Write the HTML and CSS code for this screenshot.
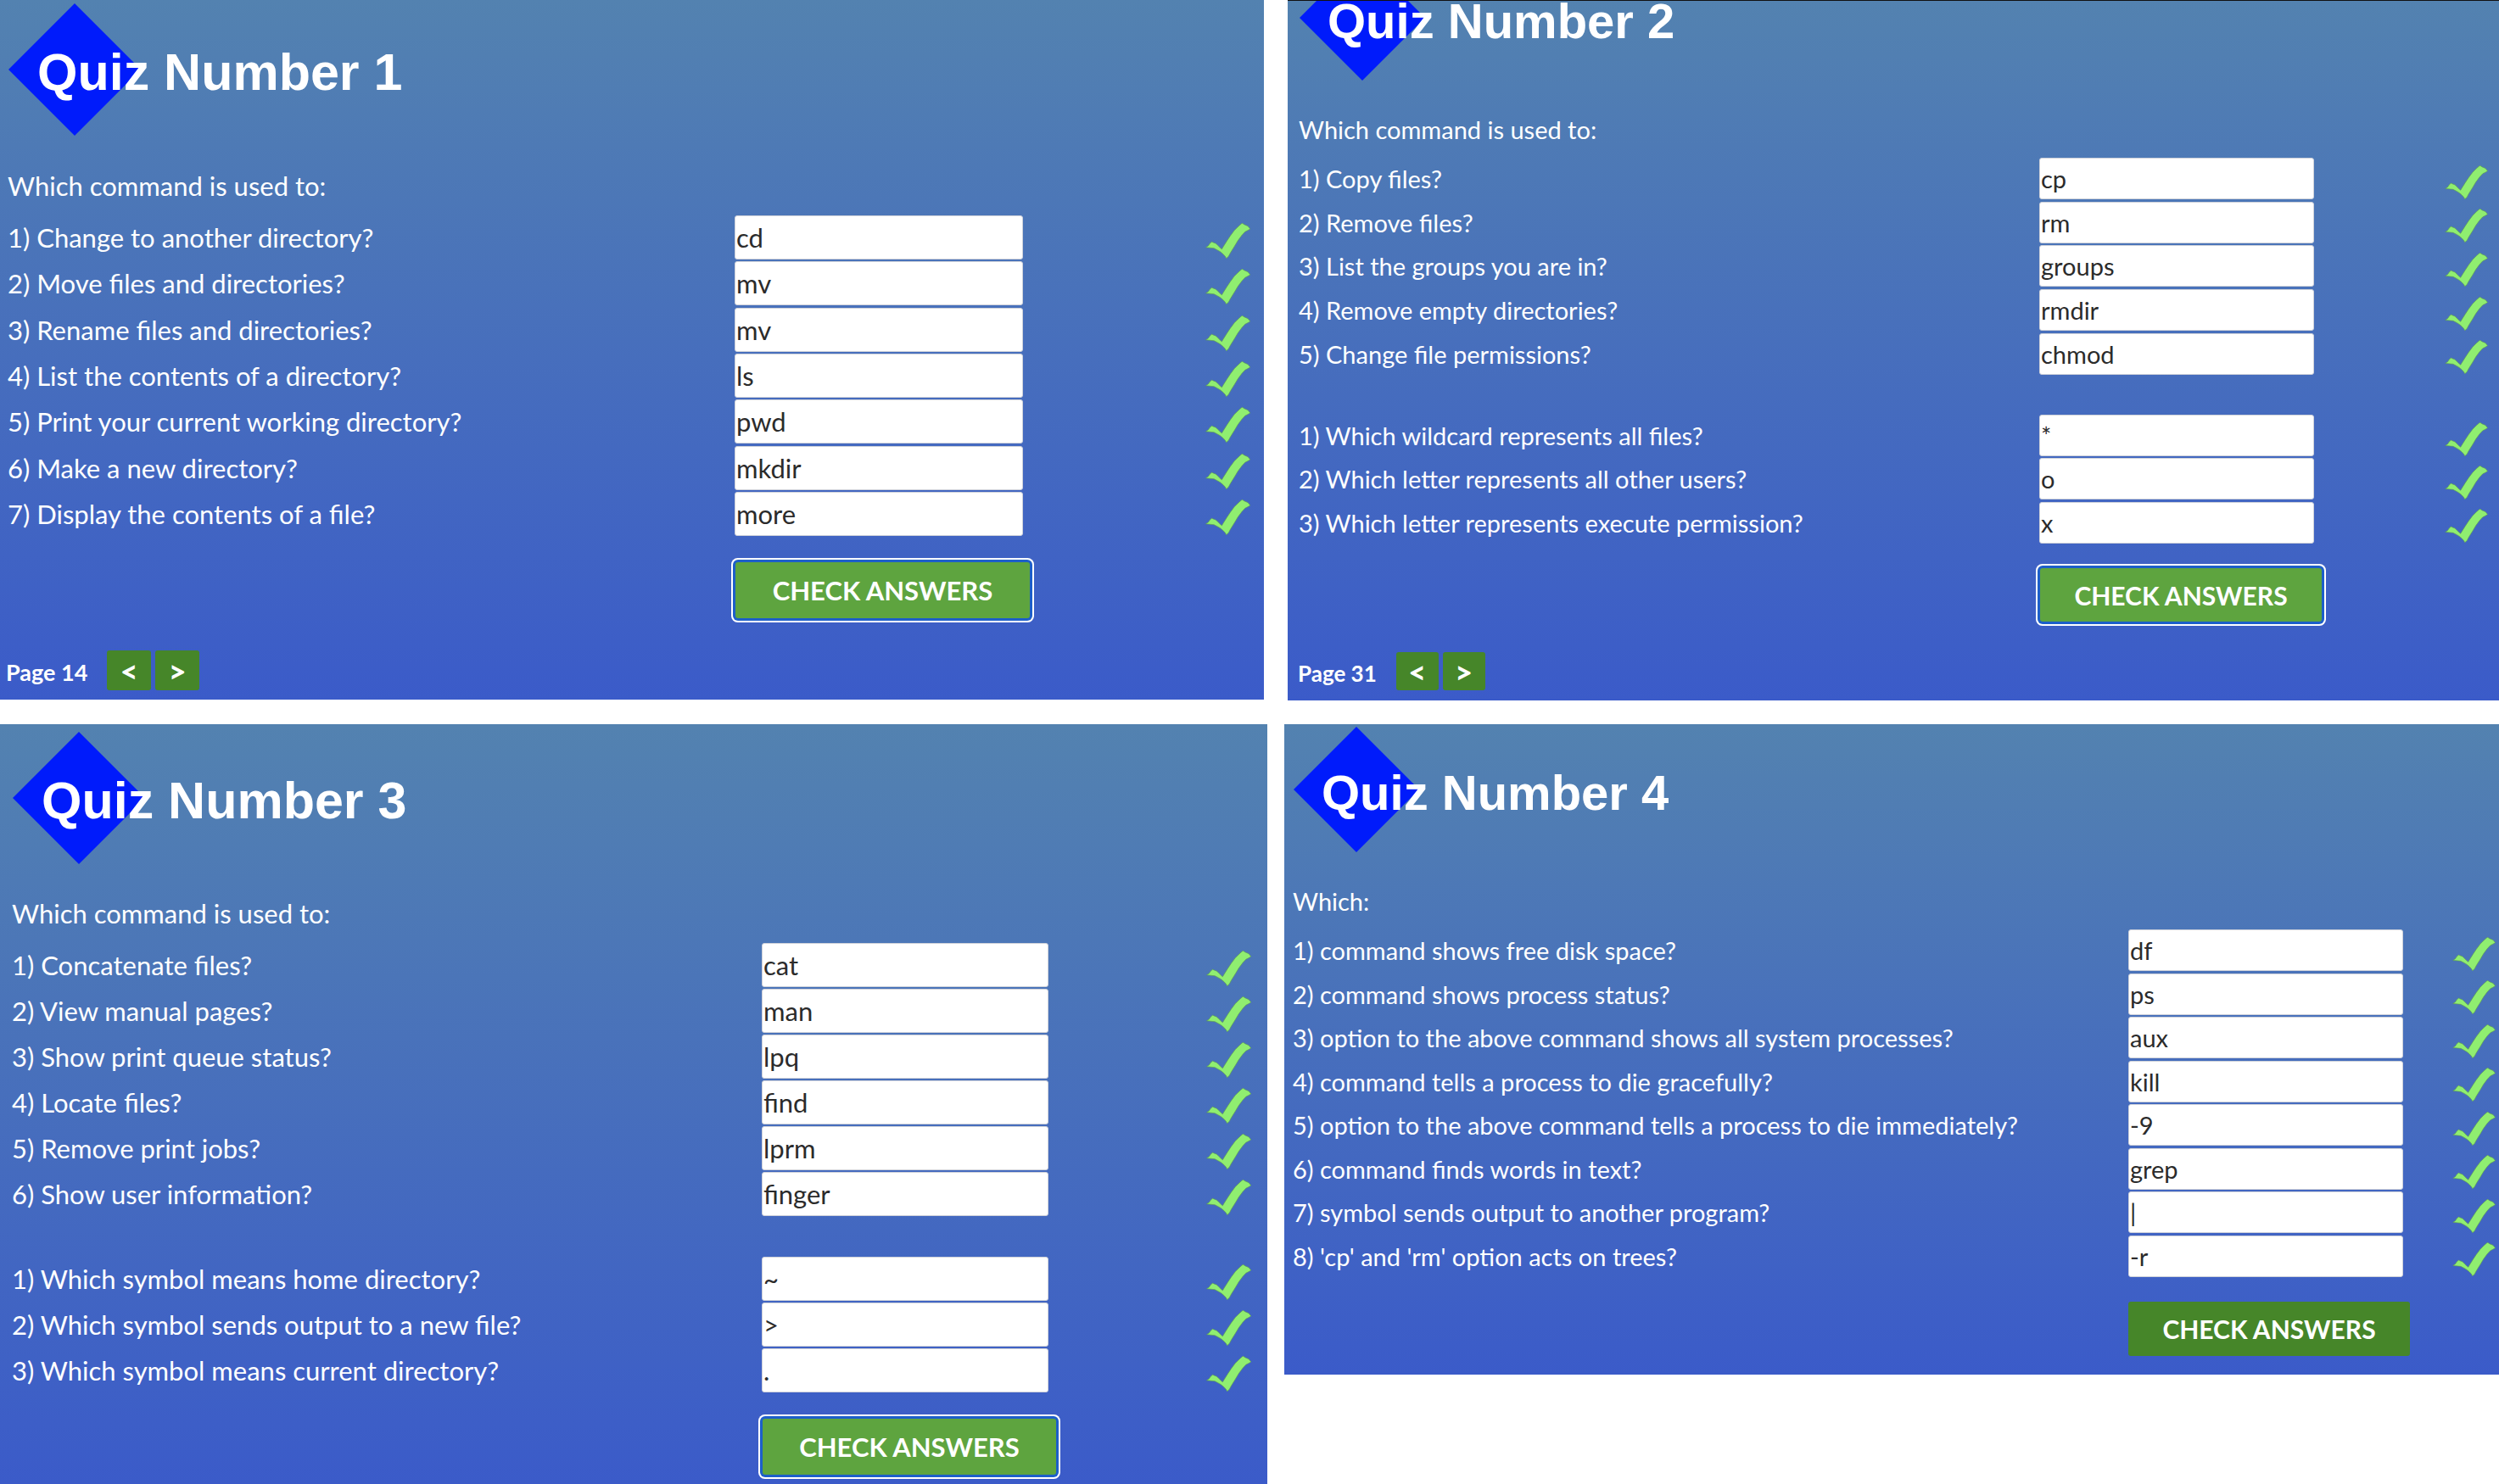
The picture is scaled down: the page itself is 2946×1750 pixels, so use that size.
FILE: index.html
```html
<!DOCTYPE html>
<html lang="en">
<head>
<meta charset="utf-8">
<title>Command quizzes</title>
<link rel="stylesheet" href="styles.css">
</head>
<body>
<svg class="symbols" aria-hidden="true">
  <symbol id="tick" viewBox="0 0 159 127"><path d="M1 87l9-6 5-8 7-6 7 3 8 3 8 8 9 9 4 3 6-10 12-19 12-18 15-20 14-14 10-9 4-2 8 5 12 5 8 10-8 5-10 5-12 13-14 19-12 20-10 16-6 10-5 10-8 7-4-7-8-9-10-8-12-7-10-5z"/></symbol>
  <symbol id="diamond" viewBox="0 0 100 100"><path d="M50 0L100 50 50 100 0 50z"/></symbol>
</svg>
<main class="page">
  <div class="pair pair-top">
    <form class="quiz large quiz-1">
      <header class="title"><svg class="diamond" aria-hidden="true"><use href="#diamond"/></svg><h1>Quiz Number 1</h1></header>
      <p class="prompt">Which command is used to:</p>
      <div class="questions">
        <div class="row"><label for="a1">1) Change to another directory?</label><input id="a1" value="cd"><svg class="tick"><use href="#tick"/></svg></div>
        <div class="row"><label for="a2">2) Move files and directories?</label><input id="a2" value="mv"><svg class="tick"><use href="#tick"/></svg></div>
        <div class="row"><label for="a3">3) Rename files and directories?</label><input id="a3" value="mv"><svg class="tick"><use href="#tick"/></svg></div>
        <div class="row"><label for="a4">4) List the contents of a directory?</label><input id="a4" value="ls"><svg class="tick"><use href="#tick"/></svg></div>
        <div class="row"><label for="a5">5) Print your current working directory?</label><input id="a5" value="pwd"><svg class="tick"><use href="#tick"/></svg></div>
        <div class="row"><label for="a6">6) Make a new directory?</label><input id="a6" value="mkdir"><svg class="tick"><use href="#tick"/></svg></div>
        <div class="row"><label for="a7">7) Display the contents of a file?</label><input id="a7" value="more"><svg class="tick"><use href="#tick"/></svg></div>
      </div>
      <div class="actions"><button type="button" class="check focused">CHECK ANSWERS</button></div>
      <footer class="pager"><span>Page 14</span><button type="button" aria-label="Previous page">&lt;</button><button type="button" aria-label="Next page">&gt;</button></footer>
    </form>

    <form class="quiz small quiz-2">
      <header class="title"><svg class="diamond" aria-hidden="true"><use href="#diamond"/></svg><h1>Quiz Number 2</h1></header>
      <p class="prompt">Which command is used to:</p>
      <div class="questions">
        <div class="row"><label for="b1">1) Copy files?</label><input id="b1" value="cp"><svg class="tick"><use href="#tick"/></svg></div>
        <div class="row"><label for="b2">2) Remove files?</label><input id="b2" value="rm"><svg class="tick"><use href="#tick"/></svg></div>
        <div class="row"><label for="b3">3) List the groups you are in?</label><input id="b3" value="groups"><svg class="tick"><use href="#tick"/></svg></div>
        <div class="row"><label for="b4">4) Remove empty directories?</label><input id="b4" value="rmdir"><svg class="tick"><use href="#tick"/></svg></div>
        <div class="row"><label for="b5">5) Change file permissions?</label><input id="b5" value="chmod"><svg class="tick"><use href="#tick"/></svg></div>
      </div>
      <div class="questions">
        <div class="row"><label for="b6">1) Which wildcard represents all files?</label><input id="b6" value="*"><svg class="tick"><use href="#tick"/></svg></div>
        <div class="row"><label for="b7">2) Which letter represents all other users?</label><input id="b7" value="o"><svg class="tick"><use href="#tick"/></svg></div>
        <div class="row"><label for="b8">3) Which letter represents execute permission?</label><input id="b8" value="x"><svg class="tick"><use href="#tick"/></svg></div>
      </div>
      <div class="actions"><button type="button" class="check focused">CHECK ANSWERS</button></div>
      <footer class="pager"><span>Page 31</span><button type="button" aria-label="Previous page">&lt;</button><button type="button" aria-label="Next page">&gt;</button></footer>
    </form>
  </div>

  <div class="pair pair-bottom">
    <form class="quiz large quiz-3">
      <header class="title"><svg class="diamond" aria-hidden="true"><use href="#diamond"/></svg><h1>Quiz Number 3</h1></header>
      <p class="prompt">Which command is used to:</p>
      <div class="questions">
        <div class="row"><label for="c1">1) Concatenate files?</label><input id="c1" value="cat"><svg class="tick"><use href="#tick"/></svg></div>
        <div class="row"><label for="c2">2) View manual pages?</label><input id="c2" value="man"><svg class="tick"><use href="#tick"/></svg></div>
        <div class="row"><label for="c3">3) Show print queue status?</label><input id="c3" value="lpq"><svg class="tick"><use href="#tick"/></svg></div>
        <div class="row"><label for="c4">4) Locate files?</label><input id="c4" value="find"><svg class="tick"><use href="#tick"/></svg></div>
        <div class="row"><label for="c5">5) Remove print jobs?</label><input id="c5" value="lprm"><svg class="tick"><use href="#tick"/></svg></div>
        <div class="row"><label for="c6">6) Show user information?</label><input id="c6" value="finger"><svg class="tick"><use href="#tick"/></svg></div>
      </div>
      <div class="questions">
        <div class="row"><label for="c7">1) Which symbol means home directory?</label><input id="c7" value="~"><svg class="tick"><use href="#tick"/></svg></div>
        <div class="row"><label for="c8">2) Which symbol sends output to a new file?</label><input id="c8" value="&gt;"><svg class="tick"><use href="#tick"/></svg></div>
        <div class="row"><label for="c9">3) Which symbol means current directory?</label><input id="c9" value="."><svg class="tick"><use href="#tick"/></svg></div>
      </div>
      <div class="actions"><button type="button" class="check focused">CHECK ANSWERS</button></div>
    </form>

    <form class="quiz small quiz-4">
      <header class="title"><svg class="diamond" aria-hidden="true"><use href="#diamond"/></svg><h1>Quiz Number 4</h1></header>
      <p class="prompt">Which:</p>
      <div class="questions">
        <div class="row"><label for="d1">1) command shows free disk space?</label><input id="d1" value="df"><svg class="tick"><use href="#tick"/></svg></div>
        <div class="row"><label for="d2">2) command shows process status?</label><input id="d2" value="ps"><svg class="tick"><use href="#tick"/></svg></div>
        <div class="row"><label for="d3">3) option to the above command shows all system processes?</label><input id="d3" value="aux"><svg class="tick"><use href="#tick"/></svg></div>
        <div class="row"><label for="d4">4) command tells a process to die gracefully?</label><input id="d4" value="kill"><svg class="tick"><use href="#tick"/></svg></div>
        <div class="row"><label for="d5">5) option to the above command tells a process to die immediately?</label><input id="d5" value="-9"><svg class="tick"><use href="#tick"/></svg></div>
        <div class="row"><label for="d6">6) command finds words in text?</label><input id="d6" value="grep"><svg class="tick"><use href="#tick"/></svg></div>
        <div class="row"><label for="d7">7) symbol sends output to another program?</label><input id="d7" value="|"><svg class="tick"><use href="#tick"/></svg></div>
        <div class="row"><label for="d8">8) 'cp' and 'rm' option acts on trees?</label><input id="d8" value="-r"><svg class="tick"><use href="#tick"/></svg></div>
      </div>
      <div class="actions"><button type="button" class="check">CHECK ANSWERS</button></div>
    </form>
  </div>
</main>
</body>
</html>
```
FILE: styles.css
```css
* { box-sizing: border-box; }

body {
  margin: 0;
  background: #fff;
  font-family: Lato, "Liberation Sans", sans-serif;
}

.symbols { display: none; }

.page {
  display: flex;
  flex-direction: column;
  gap: 28px;
}

.pair {
  display: grid;
  align-items: start;
}
.pair-top { grid-template-columns: 1490fr 1428fr; column-gap: 28px; }
.pair-bottom { grid-template-columns: 1494fr 1432fr; column-gap: 20px; }

/* Panels: two sizes, large and small */
.quiz {
  overflow: hidden;
  padding-left: var(--inset);
  background: linear-gradient(#5382b0, #3b5bc9);
  color: #fff;
  font-size: var(--text);
}
.large {
  --text: 31px;
  --button-text: 31px;
  --pager-text: 27px;
  --title: 61px;
  --diamond: 156px;
  --row: 54px;
  --field: 340px;
  --tick-w: 53px;
  --tick-h: 42px;
  --button-w: 347px;
  --button-h: 66px;
  --title-shift: 34px;
}
.small {
  --text: 29px;
  --button-text: 30px;
  --pager-text: 26px;
  --title: 58px;
  --diamond: 148px;
  --row: 51px;
  --field: 324px;
  --tick-w: 51px;
  --tick-h: 40px;
  --button-w: 332px;
  --button-h: 64px;
  --title-shift: 33px;
}
.quiz-1 { --inset: 9px; --side: 284px; --tick-end: 16px; padding-top: 4px; padding-bottom: 11px; }
.quiz-2 { --inset: 13px; --side: 218px; --tick-end: 13px; --button-h: 63px; border-top: 1px solid #111; padding-bottom: 12px; }
.quiz-3 { --inset: 14px; --side: 258px; --tick-end: 19px; --field: 338px; --button-w: 346px; padding-top: 9px; padding-bottom: 11px; }
.quiz-4 { --inset: 10px; --side: 113px; --tick-end: 4px; padding-top: 3px; padding-bottom: 22px; }

.title {
  display: grid;
  align-items: center;
  margin-left: 1px;
  margin-bottom: 32px;
}
.quiz-2 .title { margin-top: -54px; }
.quiz-3 .title { margin-bottom: 31px; }
.title > * { grid-area: 1 / 1; }
.diamond {
  width: var(--diamond);
  height: var(--diamond);
  fill: #001bfb;
}
h1 {
  margin: 0;
  padding: 7px 0 0 var(--title-shift);
  font: bold var(--title)/1 "Liberation Sans", Arial, sans-serif;
}

.prompt {
  margin: 0 0 7px;
  line-height: var(--row);
}

.questions {
  display: grid;
  grid-auto-rows: 1fr;
}
.quiz-1 .questions { min-height: 380px; }
.quiz-2 .questions { min-height: 258px; }
.quiz-2 .questions + .questions { min-height: 154px; }
.quiz-4 .questions { min-height: 412px; }
.questions + .questions { margin-top: 45px; }
.quiz-3 .questions + .questions { margin-top: 46px; }

.row {
  display: grid;
  grid-template-columns: minmax(0, 1fr) var(--field) var(--side);
  align-items: center;
  line-height: var(--row);
}
.row label { white-space: nowrap; }
.row input {
  width: 100%;
  height: calc(var(--row) - 2px);
  border: 1px solid #cfd2da;
  border-radius: 3px;
  padding: 0 1px;
  background: #fff;
  color: #2b2b2b;
  font: inherit;
}
.tick {
  justify-self: end;
  width: var(--tick-w);
  height: var(--tick-h);
  margin: 8px var(--tick-end) 0 0;
  fill: #90ee70;
  stroke: #5f9c50;
  stroke-width: 2px;
}

.actions {
  display: flex;
  justify-content: flex-end;
  margin-top: 30px;
  padding-right: calc(var(--side) + var(--field) - var(--button-w));
}
.small .actions { margin-top: 28px; }

button {
  border: 0;
  border-radius: 3px;
  padding: 0;
  background: #468629;
  color: #fff;
  font: bold var(--button-text)/40px Lato, "Liberation Sans", sans-serif;
}
.check {
  width: var(--button-w);
  height: var(--button-h);
}
.focused {
  margin-right: -1px;
  background: #5ea43f;
  box-shadow: 0 0 0 3px #1d5fc9, 0 0 0 5px #fff;
}

.pager {
  display: flex;
  align-items: center;
  gap: 5px;
  margin-top: 38px;
  margin-left: -2px;
  font-size: var(--pager-text);
  font-weight: bold;
}
.pager span { padding: 4px 18px 0 0; }
.pager button { width: 52px; height: 47px; font-size: 36px; font-weight: 900; }
.quiz-2 .pager { margin-top: 36px; margin-left: -1px; }
.quiz-2 .pager button { width: 50px; height: 45px; }
```
